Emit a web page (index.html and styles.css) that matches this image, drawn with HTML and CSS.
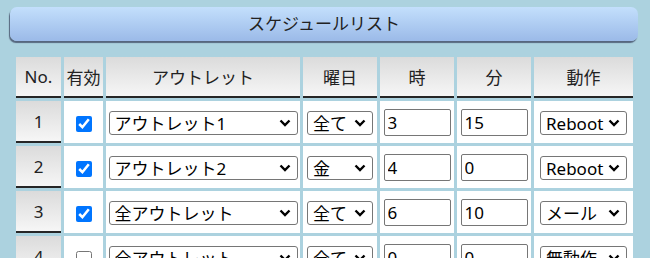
FILE: index.html
```html
<!DOCTYPE html>
<html>
<head>
    <meta charset="utf-8">
    <title>スケジュールリスト</title>
    <link rel="stylesheet" href="styles.css">
</head>
<body>
    <div class="page">
        <div class="title-bar">スケジュールリスト</div>

        <table class="schedule">
            <thead>
                <tr>
                    <th class="col-no">No.</th>
                    <th class="col-on">有効</th>
                    <th class="col-outlet">アウトレット</th>
                    <th class="col-day">曜日</th>
                    <th class="col-time">時</th>
                    <th class="col-time">分</th>
                    <th class="col-act">動作</th>
                </tr>
            </thead>
            <tbody>
                <tr>
                    <td class="no">1</td>
                    <td><input type="checkbox" class="check" checked></td>
                    <td>
                        <span class="pick pick-outlet">
                            <select><option>アウトレット1</option></select>
                            <svg class="chev" viewBox="0 0 12 8"><path d="M1.5 1.5 L6 6 L10.5 1.5"/></svg>
                        </span>
                    </td>
                    <td>
                        <span class="pick pick-day">
                            <select><option>全て</option></select>
                            <svg class="chev" viewBox="0 0 12 8"><path d="M1.5 1.5 L6 6 L10.5 1.5"/></svg>
                        </span>
                    </td>
                    <td><input type="text" class="num" value="3"></td>
                    <td><input type="text" class="num" value="15"></td>
                    <td>
                        <span class="pick pick-act">
                            <select><option>Reboot</option></select>
                            <svg class="chev" viewBox="0 0 12 8"><path d="M1.5 1.5 L6 6 L10.5 1.5"/></svg>
                        </span>
                    </td>
                </tr>
                <tr>
                    <td class="no">2</td>
                    <td><input type="checkbox" class="check" checked></td>
                    <td>
                        <span class="pick pick-outlet">
                            <select><option>アウトレット2</option></select>
                            <svg class="chev" viewBox="0 0 12 8"><path d="M1.5 1.5 L6 6 L10.5 1.5"/></svg>
                        </span>
                    </td>
                    <td>
                        <span class="pick pick-day">
                            <select><option>金</option></select>
                            <svg class="chev" viewBox="0 0 12 8"><path d="M1.5 1.5 L6 6 L10.5 1.5"/></svg>
                        </span>
                    </td>
                    <td><input type="text" class="num" value="4"></td>
                    <td><input type="text" class="num" value="0"></td>
                    <td>
                        <span class="pick pick-act">
                            <select><option>Reboot</option></select>
                            <svg class="chev" viewBox="0 0 12 8"><path d="M1.5 1.5 L6 6 L10.5 1.5"/></svg>
                        </span>
                    </td>
                </tr>
                <tr>
                    <td class="no">3</td>
                    <td><input type="checkbox" class="check" checked></td>
                    <td>
                        <span class="pick pick-outlet">
                            <select><option>全アウトレット</option></select>
                            <svg class="chev" viewBox="0 0 12 8"><path d="M1.5 1.5 L6 6 L10.5 1.5"/></svg>
                        </span>
                    </td>
                    <td>
                        <span class="pick pick-day">
                            <select><option>全て</option></select>
                            <svg class="chev" viewBox="0 0 12 8"><path d="M1.5 1.5 L6 6 L10.5 1.5"/></svg>
                        </span>
                    </td>
                    <td><input type="text" class="num" value="6"></td>
                    <td><input type="text" class="num" value="10"></td>
                    <td>
                        <span class="pick pick-act">
                            <select><option>メール</option></select>
                            <svg class="chev" viewBox="0 0 12 8"><path d="M1.5 1.5 L6 6 L10.5 1.5"/></svg>
                        </span>
                    </td>
                </tr>
                <tr>
                    <td class="no">4</td>
                    <td><input type="checkbox" class="check"></td>
                    <td>
                        <span class="pick pick-outlet">
                            <select><option>全アウトレット</option></select>
                            <svg class="chev" viewBox="0 0 12 8"><path d="M1.5 1.5 L6 6 L10.5 1.5"/></svg>
                        </span>
                    </td>
                    <td>
                        <span class="pick pick-day">
                            <select><option>全て</option></select>
                            <svg class="chev" viewBox="0 0 12 8"><path d="M1.5 1.5 L6 6 L10.5 1.5"/></svg>
                        </span>
                    </td>
                    <td><input type="text" class="num" value="0"></td>
                    <td><input type="text" class="num" value="0"></td>
                    <td>
                        <span class="pick pick-act">
                            <select><option>無動作</option></select>
                            <svg class="chev" viewBox="0 0 12 8"><path d="M1.5 1.5 L6 6 L10.5 1.5"/></svg>
                        </span>
                    </td>
                </tr>
            </tbody>
        </table>
    </div>
</body>
</html>
```

FILE: styles.css
```css
body {
    margin: 0;
    background-color: #acd2df;
    font-family: "Noto Sans", "Noto Sans CJK JP", sans-serif;
    font-size: 17px;
    color: #222;
}

.page {
    padding: 7px 12px 0 10px;
}

.title-bar {
    height: 34px;
    line-height: 34px;
    text-align: center;
    border-radius: 7px;
    background: linear-gradient(#c3dffc, #9bbae8);
    box-shadow: -1px 2px 1px #56667e;
}

/* table */
.schedule {
    margin: 13px 0 0 3px;
    width: 623px;
    table-layout: fixed;
    border-collapse: separate;
    border-spacing: 3px;
}

.schedule th,
.schedule td {
    box-sizing: border-box;
    padding: 0;
    text-align: center;
    vertical-align: middle;
}

.schedule th {
    height: 41px;
    font-weight: normal;
    background: linear-gradient(#dbdbdb, #f6f6f6);
    border-bottom: 2px solid #262626;
}

.col-no { width: 45px; }
.col-on { width: 39px; }
.col-outlet { width: 194px; }
.col-day { width: 74px; }
.col-time { width: 74px; }
.col-act { width: 99px; }

.schedule td {
    height: 42px;
    background-color: #fff;
}

.schedule td.no {
    background: linear-gradient(#dbdbdb, #f6f6f6);
    border-bottom: 2px solid #262626;
}

/* controls */
.check {
    width: 16px;
    height: 16px;
    margin: 0;
    vertical-align: middle;
}

.pick {
    position: relative;
    display: inline-block;
    vertical-align: middle;
}

.pick select {
    appearance: none;
    -webkit-appearance: none;
    display: block;
    box-sizing: border-box;
    width: 100%;
    height: 24px;
    margin: 0;
    padding: 0 0 0 5px;
    border: 1px solid #767676;
    border-radius: 3px;
    background-color: #fff;
    font-family: inherit;
    font-size: 17px;
    color: #000;
}

.pick .chev {
    position: absolute;
    right: 7px;
    top: 8px;
    width: 12px;
    height: 8px;
    pointer-events: none;
    fill: none;
    stroke: #000;
    stroke-width: 2.4;
}

.pick-outlet { width: 189px; }
.pick-day { width: 66px; }
.pick-act { width: 87px; }

.num {
    box-sizing: border-box;
    width: 67px;
    height: 27px;
    margin: 0;
    padding: 0 3px;
    border: 1px solid #767676;
    border-radius: 2px;
    font-family: inherit;
    font-size: 17px;
    color: #000;
    vertical-align: middle;
}
```
